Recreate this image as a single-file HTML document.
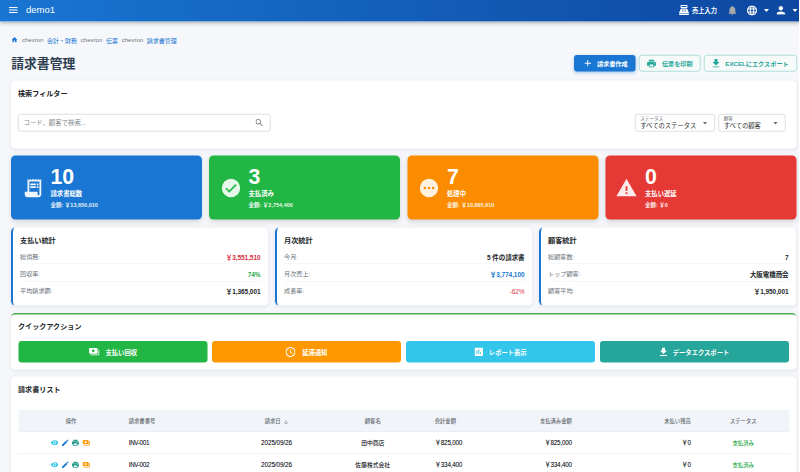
<!DOCTYPE html>
<html lang="ja">
<head>
<meta charset="utf-8">
<title>請求書管理</title>
<style>
*{box-sizing:border-box;margin:0;padding:0}
html,body{width:800px;height:472px;overflow:hidden;background:#f5f7fa}
body{font-family:"Liberation Sans","Noto Sans CJK JP",sans-serif;color:#212529}
#root{width:1600px;height:944px;transform:scale(.5);transform-origin:0 0;position:relative;background:#f5f7fa;overflow:hidden}
svg{display:block}
/* header */
.hdr{position:absolute;left:0;top:0;width:1600px;height:43px;background:linear-gradient(90deg,#1976d2 0%,#0d47a1 100%);box-shadow:0 2px 8px rgba(0,0,0,.3);color:#fff;z-index:5}
.hdr .burger{position:absolute;left:18px;top:14px;width:17px;height:12px}
.hdr .burger i{display:block;height:2.4px;background:#fff;margin-bottom:2.4px}
.hdr .brand{position:absolute;left:52px;top:8px;font-size:19px;line-height:24px;font-weight:400}
.hdr .r{position:absolute;top:0;height:42px;display:flex;align-items:center}
/* breadcrumb */
.bc{position:absolute;left:23px;top:70.5px;height:18px;display:flex;align-items:center;font-size:12px;color:#6c757d;white-space:nowrap}
.bc a{color:#1976d2;text-decoration:none;margin:0 7.5px}
.bc span{margin:0}
h1{position:absolute;left:22.5px;top:111px;font-size:25.6px;line-height:32px;font-weight:700;color:#2c3e50;letter-spacing:0}
.btn{position:absolute;top:110px;height:33px;border-radius:6px;font-size:12.3px;font-weight:700;display:flex;align-items:center;justify-content:center;white-space:nowrap}
.card{position:absolute;background:#fff;border-radius:9px;box-shadow:0 2px 8px rgba(20,30,60,.075)}
.ct{position:absolute;left:14px;font-size:14.2px;font-weight:700;color:#212529;line-height:18px}

/* header right */
.hr{position:absolute;top:0;height:42px;color:#fff}
.hr svg{position:absolute}
.hr .t{position:absolute;left:1384px;top:12px;font-size:12.5px;line-height:18px;font-weight:700;white-space:nowrap}
/* buttons */
.b1{left:1148px;width:123px;padding-left:5px;background:#1976d2;color:#fff;box-shadow:0 3px 7px rgba(25,118,210,.35)}
.b2{left:1278px;width:123px;border:1.5px solid #6ec4ba;background:#f6fbfa;color:#26a69a}
.b3{left:1408px;width:186px;border:1.5px solid #6ec4ba;background:#f6fbfa;color:#26a69a}
.btn svg{margin-right:12px}
/* filter */
.inp{position:absolute;border:1.5px solid #bcbfc3;border-radius:5px;background:#fff}
.inp .ph{position:absolute;left:10px;top:8.5px;font-size:12.8px;line-height:16px;color:#858a8f}
.sel .l{position:absolute;left:9.5px;top:2.4px;font-size:9.2px;line-height:10px;color:#6f7478}
.sel .v{position:absolute;left:9.5px;top:13.6px;font-size:12.6px;line-height:16px;color:#333}
.sel i{position:absolute;top:15px;width:0;height:0;border:4.5px solid transparent;border-top:5px solid #666;border-bottom:0}
/* stat cards */
.sc{position:absolute;top:311px;width:382px;height:128px;border-radius:9px;color:#fff;box-shadow:0 4px 11px rgba(0,0,0,.13)}
.sc svg{position:absolute}
.sc .n{position:absolute;left:79px;top:19.5px;font-size:42.5px;line-height:44px;font-weight:700}
.sc .l{position:absolute;left:79px;top:68px;font-size:12.7px;line-height:18px;font-weight:700}
.sc .a{position:absolute;left:79px;top:92px;font-size:11px;line-height:14px;font-weight:700;opacity:.9}
/* stats panels */
.sp{position:absolute;top:455px;width:514px;height:156px;background:#fff;border-radius:9px;border-left:4px solid #1976d2;box-shadow:0 2px 8px rgba(20,30,60,.085)}
.sp h3{position:absolute;left:14px;top:16.5px;font-size:14.3px;line-height:18px;font-weight:700;color:#212529}
.sp .row{position:absolute;left:14px;right:15px;height:34.5px;border-bottom:1px solid #eceff2;font-size:12.3px;line-height:16px;color:#6c757d}
.sp .row:last-child{border-bottom:0}
.sp .row span{position:absolute;left:0;top:13.1px}
.sp .r2 b{top:13.5px!important}
.sp .r2 span{top:12px!important}
.sp .r3 b{top:12.3px!important}
.sp .r3 span{top:10.8px!important}
.sp .row b{position:absolute;right:0;top:14.6px;color:#212529;font-weight:700;font-size:13px;letter-spacing:-.15px}
/* quick actions */
.qa{position:absolute;top:53px;height:43px;width:378px;border-radius:6px;color:#fff;font-size:12.6px;font-weight:700;display:flex;align-items:center;justify-content:center}
.qa svg{margin-right:12px}
/* table */
.th{position:absolute;left:14.5px;top:67px;width:1542px;height:43px;background:#f1f4f8;border-bottom:1px solid #dfe3e8;font-size:10.6px;font-weight:500;color:#626a71}
.tr{position:absolute;left:14.5px;width:1542px;height:44px;border-bottom:1px solid #e6e9ed;font-size:12.6px;letter-spacing:-.45px;color:#212529;text-shadow:0 0 .8px rgba(33,37,41,.45)}
.th span,.tr span{position:absolute;top:13.5px;line-height:16px;white-space:nowrap}
.tr span{top:14.5px}
.tr svg{position:absolute;top:16px}
.tr .st{color:#28a745;font-size:10.750px;letter-spacing:0;text-shadow:0 0 .8px rgba(40,167,69,.5)}
.tr .dt{letter-spacing:-.15px}
.tr .iv{letter-spacing:-.7px}
.tr .cj{font-size:11.6px;letter-spacing:0}
</style>
</head>
<body>
<div id="root">

<div style="position:absolute;right:0;top:0;width:2.200px;height:944px;background:#fff;z-index:9"></div>
<div class="hdr">
  <div class="burger"><i></i><i></i><i></i></div>
  <div class="brand">demo1</div>
  <div class="hr" style="left:0;width:1600px">
    <!-- cash register -->
    <svg style="left:1355.800px;top:7.800px" width="24" height="24" viewBox="0 0 24 24"><path fill="#fff" d="M17 2H7c-1.100 0-2 .9-2 2v2c0 1.100.9 2 2 2h10c1.100 0 2-.9 2-2V4c0-1.100-.9-2-2-2zm0 4H7V4h10v2zm3 16H4c-1.100 0-2-.9-2-2v-1h20v1c0 1.100-.9 2-2 2zm-1.470-11.810C18.210 9.470 17.490 9 16.700 9H7.300c-.79 0-1.510.47-1.830 1.190L2 18h20l-3.470-7.810z"/><rect x="8" y="11.0" width="2" height="1" rx=".5" fill="#0f4fae"/><rect x="8" y="13.0" width="2" height="1" rx=".5" fill="#0f4fae"/><rect x="8" y="15.0" width="2" height="1" rx=".5" fill="#0f4fae"/><rect x="11" y="11.0" width="2" height="1" rx=".5" fill="#0f4fae"/><rect x="11" y="13.0" width="2" height="1" rx=".5" fill="#0f4fae"/><rect x="11" y="15.0" width="2" height="1" rx=".5" fill="#0f4fae"/><rect x="14" y="11.0" width="2" height="1" rx=".5" fill="#0f4fae"/><rect x="14" y="13.0" width="2" height="1" rx=".5" fill="#0f4fae"/><rect x="14" y="15.0" width="2" height="1" rx=".5" fill="#0f4fae"/></svg>
    <span class="t">売上入力</span>
    <!-- bell -->
    <svg style="left:1457px;top:11px" width="15.500" height="19.500" viewBox="4 2 16 20"><path fill="#a9a9a9" d="M12 22c1.1 0 2-.9 2-2h-4c0 1.1.9 2 2 2zm6-6v-5c0-3.07-1.63-5.64-4.5-6.32V4c0-.83-.67-1.500-1.500-1.500s-1.500.67-1.500 1.500v.68C7.640 5.360 6 7.920 6 11v5l-2 2v1h16v-1l-2-2z"/></svg>
    <!-- globe -->
    <svg style="left:1493.500px;top:10.500px" width="20" height="20" viewBox="2 2 20 20"><path fill="#fff" d="M11.990 2C6.470 2 2 6.480 2 12s4.470 10 9.990 10C17.520 22 22 17.520 22 12S17.520 2 11.990 2zm6.930 6h-2.950c-.32-1.250-.78-2.450-1.380-3.560 1.840.63 3.370 1.910 4.330 3.560zM12 4.040c.83 1.200 1.480 2.530 1.910 3.960h-3.820c.43-1.430 1.080-2.760 1.910-3.960zM4.260 14C4.100 13.360 4 12.690 4 12s.1-1.360.26-2h3.380c-.08.66-.14 1.320-.14 2 0 .68.06 1.340.14 2H4.260zm.82 2h2.950c.32 1.250.78 2.450 1.380 3.560-1.840-.63-3.370-1.900-4.330-3.560zm2.950-8H5.080c.96-1.660 2.490-2.930 4.330-3.560C8.810 5.550 8.350 6.750 8.030 8zM12 19.960c-.83-1.200-1.480-2.530-1.910-3.960h3.820c-.43 1.430-1.080 2.760-1.910 3.960zM14.340 14H9.660c-.09-.66-.16-1.320-.16-2 0-.68.07-1.350.16-2h4.680c.09.65.16 1.320.16 2 0 .68-.07 1.340-.16 2zm.25 5.560c.6-1.110 1.060-2.310 1.380-3.560h2.950c-.96 1.650-2.490 2.930-4.330 3.560zM16.360 14c.08-.66.14-1.320.14-2 0-.68-.06-1.340-.14-2h3.380c.16.640.26 1.310.26 2s-.1 1.360-.26 2h-3.380z"/></svg>
    <svg style="left:1528px;top:18px" width="10" height="6" viewBox="0 0 10 6"><path fill="#fff" d="M0 0h10L5 6z"/></svg>
    <!-- person -->
    <svg style="left:1553px;top:11.500px" width="17.500" height="17.500" viewBox="4 4 16 16"><path fill="#fff" d="M12 12c2.210 0 4-1.790 4-4s-1.790-4-4-4-4 1.790-4 4 1.790 4 4 4zm0 2c-2.670 0-8 1.340-8 4v2h16v-2c0-2.660-5.330-4-8-4z"/></svg>
    <svg style="left:1585px;top:18px" width="10" height="6" viewBox="0 0 10 6"><path fill="#fff" d="M0 0h10L5 6z"/></svg>
  </div>
</div>

<div class="bc">
  <svg width="12" height="11" viewBox="2 2 20 19"><path fill="#1976d2" d="M10 21v-7h4v7h5v-9h3L12 2 2 12h3v9z"/></svg>
  <span style="margin-left:9px">chevron</span><a>会計・財務</a><span>chevron</span><a>伝票</a><span>chevron</span><a style="margin-right:0">請求書管理</a>
</div>

<h1>請求書管理</h1>

<div class="btn b1"><svg width="13" height="13" viewBox="0 0 14 14"><path fill="#fff" d="M6 0h2v6h6v2H8v6H6V8H0V6h6z"/></svg>請求書作成</div>
<div class="btn b2"><svg width="18" height="16" viewBox="2 3 20 18"><path fill="#26a69a" d="M19 8H5c-1.660 0-3 1.340-3 3v6h4v4h12v-4h4v-6c0-1.660-1.340-3-3-3zm-3 11H8v-5h8v5zm3-7c-.55 0-1-.45-1-1s.45-1 1-1 1 .45 1 1-.45 1-1 1zm-1-9H6v4h12V3z"/></svg>伝票を印刷</div>
<div class="btn b3"><svg width="14" height="17" viewBox="5 3 14 17"><path fill="#26a69a" d="M19 9h-4V3H9v6H5l7 7 7-7zM5 18v2h14v-2H5z"/></svg>EXCELにエクスポート</div>


<!-- filter card -->
<div class="card" style="left:22px;top:161px;width:1571px;height:136px">
  <div class="ct" style="top:17px">検索フィルター</div>
  <div class="inp" style="left:14px;top:67px;width:505px;height:35px">
    <span class="ph">コード、顧客で検索...</span>
    <svg style="position:absolute;right:14px;top:9px" width="15" height="15" viewBox="3 3 18 18"><path fill="#757575" d="M15.500 14h-.79l-.28-.27C15.410 12.590 16 11.110 16 9.500 16 5.910 13.090 3 9.500 3S3 5.910 3 9.500 5.910 16 9.500 16c1.610 0 3.090-.59 4.230-1.570l.27.28v.79l5 4.990L20.490 19l-4.990-5zm-6 0C7.010 14 5 11.990 5 9.500S7.010 5 9.500 5 14 7.010 14 9.500 11.990 14 9.500 14z"/></svg>
  </div>
  <div class="inp sel" style="left:1248px;top:67px;width:160px;height:35px"><span class="l">ステータス</span><span class="v">すべてのステータス</span><i style="left:134.5px"></i></div>
  <div class="inp sel" style="left:1415px;top:67px;width:134px;height:35px"><span class="l">顧客</span><span class="v">すべての顧客</span><i style="left:108.5px"></i></div>
</div>

<!-- stat cards -->
<div class="sc" style="left:22px;background:#1976d2">
  <svg style="left:21.500px;top:43px" width="44" height="44" viewBox="0 0 24 24"><path fill="#fff" fill-opacity=".93" d="M19.5 3.5L18 2l-1.5 1.5L15 2l-1.5 1.5L12 2l-1.5 1.5L9 2 7.5 3.5 6 2v14H3v3c0 1.660 1.340 3 3 3h12c1.660 0 3-1.340 3-3V2l-1.500 1.500zM19 19c0 .55-.45 1-1 1s-1-.45-1-1v-3H8V5h11v14z"/><path fill="#fff" fill-opacity=".93" d="M9 7h6v2H9zM16 7h2v2h-2zM9 10h6v2H9zM16 10h2v2h-2z"/></svg>
  <div class="n">10</div><div class="l">請求書総数</div><div class="a">金額: ￥13,650,010</div>
</div>
<div class="sc" style="left:418px;background:#22b644">
  <svg style="left:21.500px;top:43px" width="44" height="44" viewBox="0 0 24 24"><circle cx="12" cy="12" r="10" fill="#e8f7ec"/><path fill="none" stroke="#22b644" stroke-width="1.850" d="M6.600 12.300l3.500 3.500 7.400-7.400"/></svg>
  <div class="n">3</div><div class="l">支払済み</div><div class="a">金額: ￥2,754,400</div>
</div>
<div class="sc" style="left:815px;background:#fb8c00">
  <svg style="left:20.500px;top:42.500px" width="44" height="44" viewBox="0 0 24 24"><circle cx="12" cy="12" r="10" fill="#fff1e0"/><circle cx="7.500" cy="12" r="1.350" fill="#fb8c00"/><circle cx="12" cy="12" r="1.350" fill="#fb8c00"/><circle cx="16.500" cy="12" r="1.350" fill="#fb8c00"/></svg>
  <div class="n">7</div><div class="l">処理中</div><div class="a">金額: ￥10,895,610</div>
</div>
<div class="sc" style="left:1211px;background:#e53935">
  <svg style="left:19.500px;top:42.500px" width="44" height="44" viewBox="0 0 24 24"><path fill="#fdeaea" d="M1 21h22L12 2 1 21z"/><path fill="#e53935" d="M11 10h2v5h-2zm0 6.500h2v2h-2z"/></svg>
  <div class="n">0</div><div class="l">支払い遅延</div><div class="a">金額: ￥0</div>
</div>

<!-- stats panels -->
<div class="sp" style="left:22px">
  <h3>支払い統計</h3>
  <div class="row" style="top:37px;height:35.500px"><span>総債務:</span><b style="color:#d62f3f">￥3,551,510</b></div>
  <div class="row r2" style="top:72.500px;height:35.500px"><span>回収率:</span><b style="color:#28a745">74%</b></div>
  <div class="row r3" style="top:108px"><span>平均請求額:</span><b>￥1,365,001</b></div>
</div>
<div class="sp" style="left:550px">
  <h3>月次統計</h3>
  <div class="row" style="top:37px;height:35.500px"><span>今月:</span><b>5 件の請求書</b></div>
  <div class="row r2" style="top:72.500px;height:35.500px"><span>月次売上:</span><b style="color:#1976d2">￥3,774,100</b></div>
  <div class="row r3" style="top:108px"><span>成長率:</span><b style="color:#dc3545;font-weight:400">-62%</b></div>
</div>
<div class="sp" style="left:1078px">
  <h3>顧客統計</h3>
  <div class="row" style="top:37px;height:35.500px"><span>総顧客数:</span><b>7</b></div>
  <div class="row r2" style="top:72.500px;height:35.500px"><span>トップ顧客:</span><b>大阪電機商会</b></div>
  <div class="row r3" style="top:108px"><span>顧客平均:</span><b>￥1,950,001</b></div>
</div>

<!-- quick actions -->
<div class="card" style="left:22px;top:626px;width:1571px;height:113px;border-top:3px solid #4caf50">
  <div class="ct" style="top:15px">クイックアクション</div>
  <div class="qa" style="left:15px;background:#22b644"><svg width="21" height="15" viewBox="1 4 22 16"><path fill="#fff" d="M19 14V6c0-1.100-.9-2-2-2H3c-1.100 0-2 .9-2 2v8c0 1.100.9 2 2 2h14c1.100 0 2-.9 2-2zm-9-1c-1.660 0-3-1.340-3-3s1.340-3 3-3 3 1.340 3 3-1.340 3-3 3zm13-6v11c0 1.100-.9 2-2 2H4v-2h17V7h2z"/></svg>支払い回収</div>
  <div class="qa" style="left:402px;background:#ff9800"><svg width="20" height="20" viewBox="2 2 20 20" style="margin-right:13px"><path fill="#fff" d="M11.990 2C6.470 2 2 6.480 2 12s4.470 10 9.990 10C17.520 22 22 17.520 22 12S17.520 2 11.990 2zM12 20c-4.420 0-8-3.580-8-8s3.580-8 8-8 8 3.580 8 8-3.580 8-8 8zm.5-13H11v6l5.250 3.150.75-1.230-4.500-2.670z"/></svg>延滞通知</div>
  <div class="qa" style="left:790px;background:#33c6ea"><svg width="17" height="17" viewBox="3 3 18 18"><path fill="#fff" d="M19 3H5c-1.100 0-2 .9-2 2v14c0 1.100.9 2 2 2h14c1.100 0 2-.9 2-2V5c0-1.100-.9-2-2-2zM9 17H7v-7h2v7zm4 0h-2V7h2v10zm4 0h-2v-4h2v4z"/></svg>レポート表示</div>
  <div class="qa" style="left:1178px;background:#26a69a"><svg width="14" height="17" viewBox="5 3 14 17"><path fill="#fff" d="M19 9h-4V3H9v6H5l7 7 7-7zM5 18v2h14v-2H5z"/></svg>データエクスポート</div>
</div>

<!-- table card -->
<div class="card" style="left:22px;top:753px;width:1571px;height:260px">
  <div class="ct" style="top:15.5px">請求書リスト</div>
  <div class="th"><span style="left:66px;width:79px;text-align:center">操作</span><span style="left:221px">請求書番号</span><span style="left:493px">請求日</span><svg style="position:absolute;left:530px;top:19.500px" width="10" height="9" viewBox="0 0 10 9"><path fill="none" stroke="#8f979e" stroke-width="1.400" d="M5 .3v7.600M.8 3.900L5 8.100l4.200-4.200"/></svg><span style="left:647px;width:124px;text-align:center">顧客名</span><span style="left:833px">会計金額</span><span style="right:435px">支払済み金額</span><span style="right:197px">未払い残高</span><span style="left:1400px;width:100px;text-align:center">ステータス</span></div>
  <div class="tr" style="top:110px"><svg style="left:65px" width="14.500" height="13" viewBox="1 4 22 16"><path fill="#25c2e8" d="M12 4.500C7 4.500 2.730 7.610 1 12c1.730 4.390 6 7.500 11 7.500s9.270-3.110 11-7.500c-1.730-4.390-6-7.500-11-7.500zM12 17c-2.760 0-5-2.240-5-5s2.240-5 5-5 5 2.240 5 5-2.240 5-5 5zm0-8c-1.660 0-3 1.340-3 3s1.340 3 3 3 3-1.340 3-3-1.340-3-3-3z"/></svg><svg style="left:87px" width="13" height="13" viewBox="3 3 18 18"><path fill="#1976d2" d="M3 17.250V21h3.750L17.810 9.940l-3.750-3.750L3 17.250zM20.710 7.040c.39-.39.39-1.020 0-1.410l-2.340-2.340c-.39-.39-1.020-.39-1.410 0l-1.830 1.830 3.750 3.750 1.830-1.830z"/></svg><svg style="left:107px" width="14" height="13" viewBox="2 3 20 18"><path fill="#2a9d8f" d="M19 8H5c-1.660 0-3 1.340-3 3v6h4v4h12v-4h4v-6c0-1.660-1.340-3-3-3zm-3 11H8v-5h8v5zm3-7c-.55 0-1-.45-1-1s.45-1 1-1 1 .45 1 1-.45 1-1 1zm-1-9H6v4h12V3z"/></svg><svg style="left:128px" width="15" height="13" viewBox="1 4 22 16"><path fill="#ff9800" d="M19 14V6c0-1.100-.9-2-2-2H3c-1.100 0-2 .9-2 2v8c0 1.100.9 2 2 2h14c1.100 0 2-.9 2-2zm-9-1c-1.660 0-3-1.340-3-3s1.340-3 3-3 3 1.340 3 3-1.340 3-3 3zm13-6v11c0 1.100-.9 2-2 2H4v-2h17V7h2z"/></svg><span class="iv" style="left:221px">INV-001</span><span class="dt" style="left:455px;width:123px;text-align:center">2025/09/26</span><span class="cj" style="left:647px;width:124px;text-align:center">田中商店</span><span style="left:833px">￥825,000</span><span style="right:435px">￥825,000</span><span style="right:197px">￥0</span><span class="st" style="left:1400px;width:100px;text-align:center">支払済み</span></div>
  <div class="tr" style="top:154px"><svg style="left:65px" width="14.500" height="13" viewBox="1 4 22 16"><path fill="#25c2e8" d="M12 4.500C7 4.500 2.730 7.610 1 12c1.730 4.390 6 7.500 11 7.500s9.270-3.110 11-7.500c-1.730-4.390-6-7.500-11-7.500zM12 17c-2.760 0-5-2.240-5-5s2.240-5 5-5 5 2.240 5 5-2.240 5-5 5zm0-8c-1.660 0-3 1.340-3 3s1.340 3 3 3 3-1.340 3-3-1.340-3-3-3z"/></svg><svg style="left:87px" width="13" height="13" viewBox="3 3 18 18"><path fill="#1976d2" d="M3 17.250V21h3.750L17.810 9.940l-3.750-3.750L3 17.250zM20.710 7.040c.39-.39.39-1.020 0-1.410l-2.340-2.340c-.39-.39-1.020-.39-1.410 0l-1.830 1.830 3.750 3.750 1.830-1.830z"/></svg><svg style="left:107px" width="14" height="13" viewBox="2 3 20 18"><path fill="#2a9d8f" d="M19 8H5c-1.660 0-3 1.340-3 3v6h4v4h12v-4h4v-6c0-1.660-1.340-3-3-3zm-3 11H8v-5h8v5zm3-7c-.55 0-1-.45-1-1s.45-1 1-1 1 .45 1 1-.45 1-1 1zm-1-9H6v4h12V3z"/></svg><svg style="left:128px" width="15" height="13" viewBox="1 4 22 16"><path fill="#ff9800" d="M19 14V6c0-1.100-.9-2-2-2H3c-1.100 0-2 .9-2 2v8c0 1.100.9 2 2 2h14c1.100 0 2-.9 2-2zm-9-1c-1.660 0-3-1.340-3-3s1.340-3 3-3 3 1.340 3 3-1.340 3-3 3zm13-6v11c0 1.100-.9 2-2 2H4v-2h17V7h2z"/></svg><span class="iv" style="left:221px">INV-002</span><span class="dt" style="left:455px;width:123px;text-align:center">2025/09/26</span><span class="cj" style="left:647px;width:124px;text-align:center">佐藤株式会社</span><span style="left:833px">￥334,400</span><span style="right:435px">￥334,400</span><span style="right:197px">￥0</span><span class="st" style="left:1400px;width:100px;text-align:center">支払済み</span></div>
</div>

</div>
</body>
</html>
